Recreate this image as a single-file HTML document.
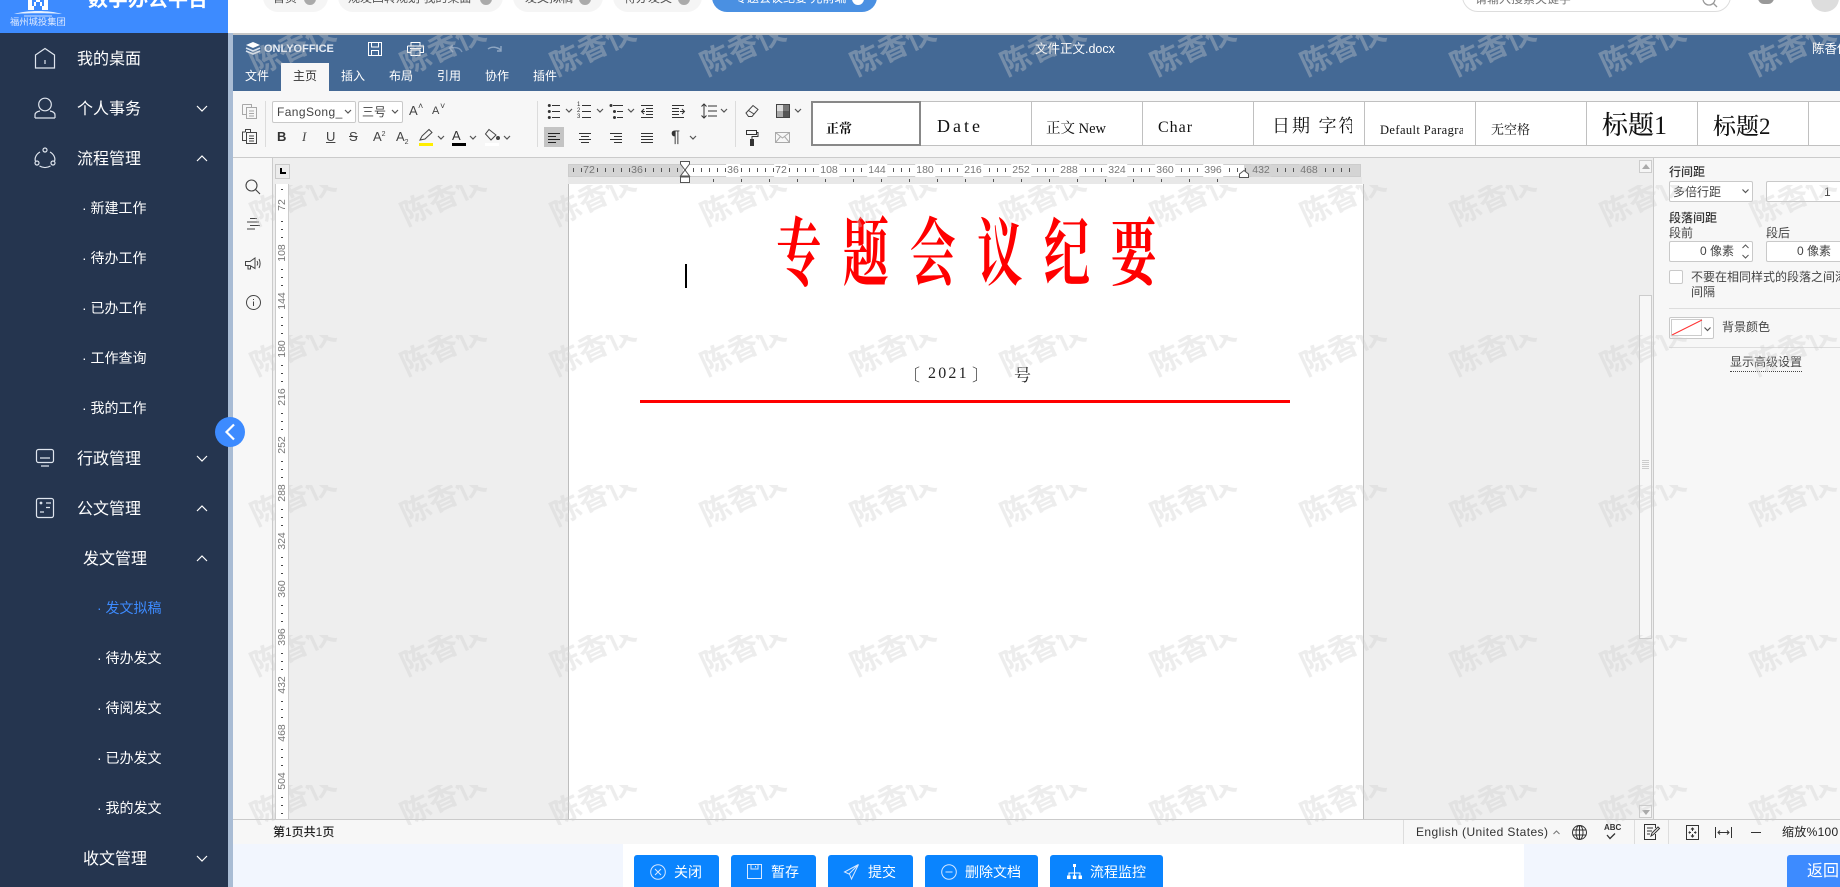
<!DOCTYPE html>
<html lang="zh"><head><meta charset="utf-8"><title>数字办公平台</title>
<style>
html,body{margin:0;padding:0;width:1840px;height:887px;overflow:hidden;background:#fff}
body{position:relative;font-family:"Liberation Sans","Noto Sans CJK SC",sans-serif;color:#333}
.a,.t,.s,svg.i{position:absolute}
.t{white-space:nowrap;height:20px;line-height:20px;font-size:12px}
.w{color:#fff}
.m{font-size:16px;color:#fff}
.u{font-size:14px;color:#fff}
.sb{position:absolute;left:0;top:0;width:228px;height:887px;background:#25354f}
.pill{position:absolute;top:-18px;height:30px;background:#f5f5f5;border-radius:15px}
.pc{position:absolute;top:-7px;width:12px;height:12px;border-radius:50%;background:#aaa}
.st{position:absolute;top:101px;height:45px;width:110px;background:#fff;border:1px solid #c0c0c0;border-left:0;overflow:hidden;color:#111;font-family:"Liberation Serif","Noto Serif CJK SC",serif}
.st span{position:absolute;white-space:nowrap;line-height:24px;height:24px}
.rn{position:absolute;top:0;height:13px;line-height:13px;font-size:10.5px;color:#777;padding:0 1px;transform:translateX(-50%)}
.vn{position:absolute;left:-8px;width:28px;height:12px;line-height:12px;text-align:center;font-size:10.5px;color:#777;background:#fff;transform:rotate(-90deg)}
.btn{position:absolute;top:855px;height:40px;background:#0a84fe;border-radius:3px}
.box{position:absolute;background:#fff;border:1px solid #c9c9c9;border-radius:2px;box-sizing:border-box}
svg{overflow:visible}
</style></head><body>

<!-- top header -->
<div class="pill" style="left:263px;width:65px"></div>
<div class="t" style="left:273px;top:-12px;font-size:12px;color:#555">首页</div><div class="pc" style="left:304px"></div>
<div class="pill" style="left:338px;width:165px"></div>
<div class="t" style="left:348px;top:-12px;color:#555">规发四转规划 我的桌面</div><div class="pc" style="left:480px"></div>
<div class="pill" style="left:513px;width:90px"></div>
<div class="t" style="left:525px;top:-12px;color:#555">发文拟稿</div><div class="pc" style="left:579px"></div>
<div class="pill" style="left:613px;width:89px"></div>
<div class="t" style="left:624px;top:-12px;color:#555">待办发文</div><div class="pc" style="left:678px"></div>
<div class="pill" style="left:712px;width:165px;background:#4a90e2"></div>
<div class="t w" style="left:735px;top:-12px">专题会议纪要 光前端</div><div class="pc" style="left:852px;background:#fff"></div>
<div class="a" style="left:1462px;top:-20px;width:269px;height:32px;border:1px solid #ddd;border-radius:16px;box-sizing:border-box;background:#fff"></div>
<div class="t" style="left:1475px;top:-11px;color:#777">请输入搜索关键字</div>
<svg class="i" style="left:1702px;top:-6px" width="20" height="20" viewBox="0 0 20 20" fill="none" stroke="#999" stroke-width="1.3"><circle cx="7" cy="5" r="6"/><path d="M11.5 9.5 L15 13"/></svg>
<div class="a" style="left:1758px;top:-8px;width:16px;height:12px;background:#999;border-radius:0 0 6px 6px"></div>
<div class="a" style="left:1811px;top:-16px;width:28px;height:28px;border-radius:50%;background:#ddd"></div>
<div class="a" style="left:233px;top:33px;width:1607px;height:2px;background:#c6c6c6"></div>

<!-- editor header -->
<div class="a" style="left:233px;top:35px;width:1607px;height:56px;background:#446995"></div>
<svg class="i" style="left:245px;top:42px" width="16" height="14" viewBox="0 0 16 14"><path d="M8 0 L15 3 L8 6 L1 3Z" fill="#fff"/><path d="M1 6 L8 9 L15 6 M1 9 L8 12 L15 9" fill="none" stroke="#d8e2ee" stroke-width="1.6"/></svg>
<div class="t w" style="left:264px;top:39px;font-weight:bold;font-size:11px;color:#e8eef6">ONLYOFFICE</div>
<svg class="i" style="left:368px;top:42px" width="14" height="14" viewBox="0 0 14 14" fill="none" stroke="#fff"><path d="M.5.5H13.5V13.5H.5ZM3.5.5V5H10.5V.5M3.5 13.5V8.5H10.5V13.5"/></svg>
<svg class="i" style="left:407px;top:42px" width="17" height="14" viewBox="0 0 17 14" fill="none" stroke="#fff"><path d="M4 4V.5H13V4M.5 4H16.5V10.5H13M4 10.5H.5V4M4 8H13V13.5H4ZM3 6.5H14"/></svg>
<svg class="i" style="left:448px;top:44px" width="14" height="10" viewBox="0 0 14 10" fill="none" stroke="#7e98b8" stroke-width="1.4"><path d="M14 8C12 3 7 3 2 4M5 1 L1.5 4.2 L5 8"/></svg>
<svg class="i" style="left:488px;top:45px" width="15" height="10" viewBox="0 0 15 10" fill="none" stroke="#8ea6c2" stroke-width="1.4"><path d="M0 4C4 1 9 2 13 5M13 1V6H9"/></svg>
<div class="t w" style="left:1035px;top:39px;font-size:12.5px">文件正文.docx</div>
<div class="t w" style="left:1812px;top:39px;width:28px;overflow:hidden;font-size:12.5px">陈香仪</div>
<div class="a" style="left:281px;top:63px;width:48px;height:28px;background:#f7f7f7"></div>
<div class="t w" style="left:245px;top:66px">文件</div>
<div class="t" style="left:293px;top:66px;color:#333">主页</div>
<div class="t w" style="left:341px;top:66px">插入</div>
<div class="t w" style="left:389px;top:66px">布局</div>
<div class="t w" style="left:437px;top:66px">引用</div>
<div class="t w" style="left:485px;top:66px">协作</div>
<div class="t w" style="left:533px;top:66px">插件</div>

<!-- toolbar -->
<div class="a" style="left:233px;top:91px;width:1607px;height:66px;background:#f7f7f7"></div>
<div class="a" style="left:233px;top:157px;width:1607px;height:1px;background:#cbcbcb"></div>
<div class="a" style="left:265px;top:101px;width:1px;height:46px;background:#dcdcdc"></div>
<div class="a" style="left:537px;top:101px;width:1px;height:46px;background:#dcdcdc"></div>
<div class="a" style="left:735px;top:101px;width:1px;height:46px;background:#dcdcdc"></div>
<svg class="i" style="left:242px;top:104px" width="15" height="15" viewBox="0 0 15 15" fill="none" stroke="#a8a8a8"><path d="M.5.5H9.5V3M4.5 3.5H14.5V14.5H4.5ZM.5.5V10.5H4M7 7H12M7 9.5H12M7 12H12"/></svg>
<svg class="i" style="left:242px;top:129px" width="15" height="15" viewBox="0 0 15 15" fill="none" stroke="#444"><path d="M3.5 3V.5H8.5V3M4.5 3.5H14.5V14.5H4.5ZM4.5 11.5H.5V3H3.5M7 7H12M7 9.5H12M7 12H12"/></svg>
<div class="box" style="left:272px;top:101px;width:84px;height:22px;overflow:hidden"><span class="t" style="left:4px;top:0;font-size:12px;letter-spacing:.4px;color:#444">FangSong_(</span><span class="a" style="right:0;top:0;width:12px;height:20px;background:#fff"></span></div>
<div class="box" style="left:358px;top:101px;width:45px;height:22px"><span class="t" style="left:3px;top:0;color:#444">三号</span></div>
<div class="t" style="left:409px;top:101px;font-size:13px;color:#444">A</div><div class="t" style="left:418px;top:96px;font-size:9px;color:#444">˄</div>
<div class="t" style="left:432px;top:101px;font-size:11px;color:#444">A</div><div class="t" style="left:440px;top:96px;font-size:9px;color:#444">˅</div>
<div class="t" style="left:277px;top:127px;font-weight:bold;font-size:13px;color:#333">B</div>
<div class="t" style="left:302px;top:127px;font-style:italic;font-size:13px;font-family:'Liberation Serif',serif;color:#444">I</div>
<div class="t" style="left:326px;top:127px;font-size:13px;color:#444;text-decoration:underline">U</div>
<div class="t" style="left:349px;top:127px;font-size:13px;color:#444;text-decoration:line-through">S</div>
<div class="t" style="left:373px;top:127px;font-size:13px;color:#444">A<sup style="font-size:7px;vertical-align:5px;line-height:0">2</sup></div>
<div class="t" style="left:396px;top:127px;font-size:13px;color:#444">A<sub style="font-size:7px;vertical-align:-3px;line-height:0">2</sub></div>
<svg class="i" style="left:419px;top:129px" width="15" height="12" viewBox="0 0 15 12" fill="none" stroke="#444"><path d="M1 11L3 7L10 0.500L13 3.500L6 10Z"/></svg>
<div class="a" style="left:419px;top:143px;width:14px;height:3px;background:#ffee00"></div>
<div class="t" style="left:452px;top:126px;font-size:13px;color:#333">A</div>
<div class="a" style="left:452px;top:143px;width:14px;height:3px;background:#000"></div>
<svg class="i" style="left:485px;top:129px" width="15" height="12" viewBox="0 0 15 12" fill="none" stroke="#444"><path d="M4 0.500L11 6L6 11L0.500 5Z"/><circle cx="13" cy="9" r="1.500" fill="#444"/></svg>
<div class="a" style="left:485px;top:143px;width:14px;height:3px;background:#fff"></div>
<div class="a" style="left:544px;top:127px;width:20px;height:20px;background:#c4c4c4"></div>
<svg class="i" style="left:0;top:0" width="1" height="1" fill="none" stroke="#555" stroke-width="1.200">
<path d="M345 110l3 3 3-3M392 110l3 3 3-3M438 136l3 3 3-3M470 136l3 3 3-3M504 136l3 3 3-3M566 109l3 3 3-3M597 109l3 3 3-3M628 109l3 3 3-3M721 109l3 3 3-3M690 136l3 3 3-3M795 109l3 3 3-3"/>
<g stroke="#333" stroke-width="1">
<path d="M552 105.500H560M552 111.500H560M552 117.500H560"/>
<path d="M582 105.500H591M582 111.500H591M582 117.500H591"/>
<path d="M613 105.500H623M617 111.500H623M617 117.500H623"/>
<path d="M641 105.500H653M646 108.500H653M646 111.500H653M646 114.500H653M641 117.500H653M642 111.500H645M644 109L641.500 111.500L644 114"/>
<path d="M672 105.500H684M672 108.500H679M672 111.500H679M672 114.500H679M672 117.500H684M680 111.500H684M682 109L684.500 111.500L682 114"/>
<path d="M704 104V118M701.500 106.500L704 104L706.500 106.500M701.500 115.500L704 118L706.500 115.500M708 106H717M708 111H717M708 116H717"/>
<path d="M548 133.500H560M548 136.500H556M548 139.500H560M548 142.500H556" stroke="#222"/>
<path d="M579 133.500H591M581 136.500H589M579 139.500H591M581 142.500H589M610 133.500H622M614 136.500H622M610 139.500H622M614 142.500H622M641 133.500H653M641 136.500H653M641 139.500H653M641 142.500H653"/>
</g>
<g fill="#333" stroke="none"><circle cx="549.300" cy="105.500" r="1.500"/><circle cx="549.300" cy="111.500" r="1.500"/><circle cx="549.300" cy="117.500" r="1.500"/><circle cx="611" cy="105.500" r="1.500"/><circle cx="614.500" cy="111.500" r="1.500"/><circle cx="614.500" cy="117.500" r="1.500"/></g>
</svg>
<div class="a" style="left:577px;top:102px;font-size:6px;line-height:6px;color:#333">1<br>2<br>3</div>
<div class="a" style="left:671px;top:127px;font-size:17px;line-height:20px;color:#333;font-family:'Liberation Sans',sans-serif">¶</div>
<svg class="i" style="left:745px;top:104px" width="14" height="14" viewBox="0 0 14 14" fill="none" stroke="#444"><path d="M1 9L8 1.500L13 5.500L7 12.500H3.500ZM3.500 6.500L9 10"/></svg>
<svg class="i" style="left:776px;top:104px" width="14" height="14" viewBox="0 0 14 14"><rect x=".5" y=".5" width="13" height="13" fill="#fff" stroke="#444"/><rect x="7" y="1" width="6" height="6" fill="#777"/><rect x="1" y="7" width="6" height="6" fill="#aaa"/><rect x="1" y="1" width="6" height="6" fill="#ddd"/><rect x="7" y="7" width="6" height="6" fill="#555"/></svg>
<svg class="i" style="left:745px;top:130px" width="14" height="16" viewBox="0 0 14 16"><path d="M1.500 .5H11.500V4.500H1.500Z" fill="none" stroke="#333"/><path d="M11.500 2.500H13V6.500H7V9" fill="none" stroke="#333"/><rect x="5" y="9" width="4" height="7" fill="#333"/></svg>
<svg class="i" style="left:775px;top:132px" width="15" height="11" viewBox="0 0 15 11" fill="none" stroke="#aaa"><path d="M.5.5H14.500V10.500H.5ZM.5.5L7.500 6L14.500.5M.5 10.500L5.500 4.500M14.500 10.500L9.500 4.500"/></svg>

<!-- style gallery -->
<div class="st" style="left:921px;width:111px;box-sizing:border-box"><span style="left:16px;top:12px;font-size:18px;letter-spacing:3px">Date</span></div>
<div class="st" style="left:1032px;width:111px;box-sizing:border-box"><span style="left:14px;top:15px;font-size:14.500px">正文 New</span></div>
<div class="st" style="left:1143px;width:111px;box-sizing:border-box"><span style="left:15px;top:14px;font-size:16px;letter-spacing:1px">Char</span></div>
<div class="st" style="left:1254px;width:111px;box-sizing:border-box"><span style="left:18px;top:12px;font-size:18px;letter-spacing:2px;width:80px;overflow:hidden">日期 字符</span></div>
<div class="st" style="left:1365px;width:111px;box-sizing:border-box"><span style="left:15px;top:16px;font-size:12.5px;width:83px;overflow:hidden;letter-spacing:.4px">Default Paragraph</span></div>
<div class="st" style="left:1476px;width:111px;box-sizing:border-box"><span style="left:15px;top:16px;font-size:13px">无空格</span></div>
<div class="st" style="left:1587px;width:111px;box-sizing:border-box"><span style="left:15px;top:12px;font-size:26px;line-height:24px;font-weight:500">标题1</span></div>
<div class="st" style="left:1698px;width:111px;box-sizing:border-box"><span style="left:15px;top:13px;font-size:23px;line-height:24px;font-weight:500">标题2</span></div>
<div class="st" style="left:1809px;width:40px;box-sizing:border-box"></div>
<div class="st" style="left:811px;width:110px;box-sizing:border-box;border:2.500px solid #888"><span style="left:13px;top:14px;font-size:13px;font-weight:bold">正常</span></div>

<!-- workspace -->
<div class="a" style="left:233px;top:158px;width:39px;height:661px;background:#f7f7f7"></div>
<div class="a" style="left:272px;top:158px;width:1px;height:661px;background:#cbcbcb"></div>
<div class="a" style="left:273px;top:158px;width:1380px;height:661px;background:#eee"></div>
<div class="a" style="left:1653px;top:158px;width:1px;height:661px;background:#cbcbcb"></div>
<div class="a" style="left:1654px;top:158px;width:186px;height:661px;background:#f7f7f7"></div>
<!-- page -->
<div class="a" style="left:568px;top:184px;width:794px;height:635px;background:#fff;border-left:1px solid #bdbdbd;border-right:1px solid #bdbdbd"></div>

<!-- left panel icons -->
<svg class="i" style="left:245px;top:179px" width="16" height="16" viewBox="0 0 16 16" fill="none" stroke="#444" stroke-width="1.100"><circle cx="6.500" cy="6.500" r="5.500"/><path d="M10.500 10.500L15 15"/></svg>
<svg class="i" style="left:246px;top:218px" width="14" height="13" viewBox="0 0 14 13" fill="none" stroke="#444"><path d="M4 .5H11M1 4H13M4 7.500H14M1 11H9"/></svg>
<svg class="i" style="left:245px;top:257px" width="16" height="13" viewBox="0 0 16 13" fill="none" stroke="#444"><path d="M.5 4.500H5L10 1V11.500L5 8.500H.5ZM3 8.500V12H5.500V9M12 4C13 5.500 13 7 12 8.500M14 2C15.500 5 15.500 8 14 11"/></svg>
<svg class="i" style="left:246px;top:295px" width="15" height="15" viewBox="0 0 15 15" fill="none" stroke="#444"><circle cx="7.500" cy="7.500" r="7"/><path d="M7.500 6.500V11M7.500 4V5"/></svg>

<!-- horizontal ruler -->
<div class="a" style="left:568px;top:177px;width:794px;height:7px;background:#e8e8e8"></div>
<div class="a" style="left:713px;top:179px;width:505px;height:3px;background:repeating-linear-gradient(90deg,#555 0,#555 1px,transparent 1px,transparent 28px)"></div>
<div class="a" style="left:568px;top:164px;width:793px;height:13px;background:#fff;box-sizing:border-box;border:1px solid #ccc"></div>
<div class="a" style="left:569px;top:165px;width:114px;height:11px;background:#d4d4d4"></div>
<div class="a" style="left:1244px;top:165px;width:116px;height:11px;background:#d4d4d4"></div>
<div class="a" style="left:573px;top:168px;width:784px;height:4px;background:repeating-linear-gradient(90deg,#555 0,#555 1px,transparent 1px,transparent 8px)"></div>
<div class="a" style="left:568px;top:164px;width:793px;height:13px">
<span class="rn" style="left:21px;background:#d4d4d4">72</span><span class="rn" style="left:69px;background:#d4d4d4">36</span><span class="rn" style="left:165px;background:#fff">36</span><span class="rn" style="left:213px;background:#fff">72</span><span class="rn" style="left:261px;background:#fff">108</span><span class="rn" style="left:309px;background:#fff">144</span><span class="rn" style="left:357px;background:#fff">180</span><span class="rn" style="left:405px;background:#fff">216</span><span class="rn" style="left:453px;background:#fff">252</span><span class="rn" style="left:501px;background:#fff">288</span><span class="rn" style="left:549px;background:#fff">324</span><span class="rn" style="left:597px;background:#fff">360</span><span class="rn" style="left:645px;background:#fff">396</span><span class="rn" style="left:693px;background:#d4d4d4">432</span><span class="rn" style="left:741px;background:#d4d4d4">468</span></div>
<svg class="i" style="left:680px;top:161px" width="10" height="22" viewBox="0 0 10 22"><path d="M.5.5H9.500V3L5 9L.5 3ZM5 9L9.500 15H.5Z" fill="#fff" stroke="#555"/><path d="M.5 15.500H9.500V21.500H.5Z" fill="#fff" stroke="#555"/><path d="M.5 16H9.500" stroke="#555"/></svg>
<svg class="i" style="left:1239px;top:170px" width="10" height="8" viewBox="0 0 10 8"><path d="M.5 7.500V4L5 .5L9.500 4V7.500Z" fill="#fff" stroke="#555"/></svg>
<div class="a" style="left:275px;top:164px;width:15px;height:15px;box-sizing:border-box;background:#ececec;border:1px solid #c9c9c9"></div>
<div class="a" style="left:280px;top:168px;width:2px;height:6px;background:#000"></div><div class="a" style="left:280px;top:172px;width:6px;height:2px;background:#000"></div>

<!-- doc content -->
<div class="a" style="left:685px;top:264px;width:2px;height:24px;background:#000"></div>
<div class="a" id="title" style="left:776px;top:204px;width:640px;height:88px;line-height:88px;white-space:nowrap;font-family:'Noto Serif CJK SC','Noto Sans CJK SC',serif;font-weight:700;font-size:74px;letter-spacing:34px;color:#f00;transform:scaleX(.62);transform-origin:0 0">专题会议纪要</div>
<div class="a" style="left:903px;top:362px;height:24px;line-height:24px;font-family:'Noto Serif CJK SC',serif;font-size:17px;color:#222;white-space:nowrap">〔</div>
<div class="a" style="left:928px;top:362px;height:24px;line-height:24px;font-family:'Liberation Serif',serif;font-size:16px;color:#222;letter-spacing:2.200px;white-space:nowrap">2021</div>
<div class="a" style="left:972px;top:362px;height:24px;line-height:24px;font-family:'Noto Serif CJK SC',serif;font-size:17px;color:#222;white-space:nowrap">〕</div>
<div class="a" style="left:1014px;top:362px;height:24px;line-height:24px;font-family:'Noto Serif CJK SC',serif;font-size:17px;color:#222;white-space:nowrap">号</div>
<div class="a" style="left:640px;top:399.500px;width:650px;height:3px;background:#f00"></div>

<!-- scrollbar -->
<div class="a" style="left:1639px;top:160px;width:13px;height:13px;box-sizing:border-box;border:1px solid #ccc;background:#f5f5f5"></div>
<svg class="i" style="left:1642px;top:164px" width="8" height="5"><path d="M0 5L4 0L8 5Z" fill="#aaa"/></svg>
<div class="a" style="left:1639px;top:295px;width:13px;height:344px;box-sizing:border-box;border:1px solid #ccc;background:#f7f7f7"></div>
<div class="a" style="left:1642px;top:460px;width:7px;height:10px;background:repeating-linear-gradient(180deg,#ccc 0,#ccc 1px,transparent 1px,transparent 2px)"></div>
<div class="a" style="left:1639px;top:805px;width:13px;height:13px;box-sizing:border-box;border:1px solid #ccc;background:#f5f5f5"></div>
<svg class="i" style="left:1642px;top:810px" width="8" height="5"><path d="M0 0L4 5L8 0Z" fill="#aaa"/></svg>

<!-- right panel -->
<div class="t" style="left:1669px;top:162px;font-weight:500">行间距</div>
<div class="box" style="left:1669px;top:181px;width:84px;height:21px"></div>
<div class="t" style="left:1673px;top:182px;color:#444">多倍行距</div>
<svg class="i" style="left:1742px;top:189px" width="7" height="5" fill="none" stroke="#555" stroke-width="1.200"><path d="M.5.5L3.500 3.500L6.500.5"/></svg>
<div class="box" style="left:1766px;top:181px;width:90px;height:21px"></div>
<div class="t" style="left:1824px;top:182px;color:#444">1</div>
<div class="t" style="left:1669px;top:208px;font-weight:500">段落间距</div>
<div class="t" style="left:1669px;top:223px;color:#444">段前</div>
<div class="t" style="left:1766px;top:223px;color:#444">段后</div>
<div class="box" style="left:1669px;top:241px;width:84px;height:21px"></div>
<div class="t" style="left:1700px;top:241px;color:#444">0 像素</div>
<svg class="i" style="left:1742px;top:244px" width="7" height="15" fill="none" stroke="#555"><path d="M.5 4L3.500 1L6.500 4M.5 11L3.500 14L6.500 11"/></svg>
<div class="box" style="left:1766px;top:241px;width:90px;height:21px"></div>
<div class="t" style="left:1797px;top:241px;color:#444">0 像素</div>
<div class="box" style="left:1669px;top:270px;width:14px;height:14px"></div>
<div class="t" style="left:1691px;top:267px;color:#444;width:149px;overflow:hidden">不要在相同样式的段落之间添加</div>
<div class="t" style="left:1691px;top:282px;color:#444">间隔</div>
<div class="a" style="left:1669px;top:308px;width:171px;height:1px;background:#ddd"></div>
<div class="box" style="left:1669px;top:317px;width:45px;height:22px"></div>
<svg class="i" style="left:1671px;top:319px" width="32" height="17"><rect x=".5" y=".5" width="30" height="16" fill="#fff" stroke="#ccc"/><path d="M1 16L31 1" stroke="#f33" stroke-width="1"/></svg>
<svg class="i" style="left:1704px;top:327px" width="7" height="5" fill="none" stroke="#555" stroke-width="1.200"><path d="M.5.5L3.500 3.500L6.500.5"/></svg>
<div class="t" style="left:1722px;top:317px;color:#444">背景颜色</div>
<div class="a" style="left:1669px;top:347px;width:171px;height:1px;background:#ddd"></div>
<div class="t" style="left:1730px;top:352px;color:#444">显示高级设置</div>
<div class="a" style="left:1730px;top:371px;width:72px;border-top:1px dotted #444"></div>

<!-- status bar -->
<div class="a" style="left:233px;top:819px;width:1607px;height:1px;background:#cbcbcb"></div>
<div class="a" style="left:233px;top:820px;width:1607px;height:24px;background:#f7f7f7"></div>

<!-- watermark -->
<svg class="a" style="left:0;top:0;pointer-events:none" width="1840" height="887">
<defs><pattern id="wm" patternUnits="userSpaceOnUse" x="233" y="35" width="150" height="150">
<text x="23.500" y="41" transform="rotate(-25 23.500 41)" font-family="Liberation Sans,Noto Sans CJK SC,sans-serif" font-size="30" fill="#cdcdcd" fill-opacity=".36" font-weight="700">陈香仪</text></pattern></defs>
<rect x="233" y="35" width="1607" height="790" fill="url(#wm)"/>
</svg>

<!-- vertical ruler (over watermark) -->
<div class="a" style="left:275px;top:184px;width:14px;height:635px;box-sizing:border-box;background:#fff;border-left:1px solid #ccc;border-right:1px solid #ccc"></div>
<div class="a" style="left:281px;top:189px;width:2px;height:625px;background:repeating-linear-gradient(180deg,#444 0,#444 1px,transparent 1px,transparent 8px)"></div>
<div class="a" style="left:276px;top:0;width:12px;height:0">
<span class="vn" style="top:199px">72</span><span class="vn" style="top:247px">108</span><span class="vn" style="top:295px">144</span><span class="vn" style="top:343px">180</span><span class="vn" style="top:391px">216</span><span class="vn" style="top:439px">252</span><span class="vn" style="top:487px">288</span><span class="vn" style="top:535px">324</span><span class="vn" style="top:583px">360</span><span class="vn" style="top:631px">396</span><span class="vn" style="top:679px">432</span><span class="vn" style="top:727px">468</span><span class="vn" style="top:775px">504</span></div>

<!-- status content -->
<div class="t" style="left:273px;top:822px;color:#222;font-weight:500">第1页共1页</div>
<div class="a" style="left:1403px;top:820px;width:1px;height:24px;background:#ddd"></div>
<div class="a" style="left:1634px;top:820px;width:1px;height:24px;background:#ddd"></div>
<div class="a" style="left:1668px;top:820px;width:1px;height:24px;background:#ddd"></div>
<div class="t" style="left:1416px;top:822px;color:#333;letter-spacing:.42px">English (United States)</div>
<svg class="i" style="left:1553px;top:830px" width="7" height="5" fill="none" stroke="#777"><path d="M.5 4L3.500 1L6.500 4"/></svg>
<svg class="i" style="left:1572px;top:825px" width="15" height="15" viewBox="0 0 15 15" fill="none" stroke="#333"><circle cx="7.500" cy="7.500" r="7"/><ellipse cx="7.500" cy="7.500" rx="3.500" ry="7"/><path d="M.5 5H14.500M.5 10H14.500M7.500 .5V14.500"/></svg>
<div class="t" style="left:1604px;top:818px;font-size:8px;font-weight:bold;color:#333">ABC</div>
<svg class="i" style="left:1606px;top:833px" width="10" height="7" fill="none" stroke="#333" stroke-width="1.300"><path d="M1 2L4 5.500L9 .5"/></svg>
<svg class="i" style="left:1644px;top:824px" width="16" height="16" viewBox="0 0 16 16" fill="none" stroke="#333"><path d="M11.500 4V.5H.5V15.500H11.500V10M3 4H9M3 7H8M3 10H6M7 12L8 9L14 3L15.500 4.500L9.500 10.500Z"/></svg>
<svg class="i" style="left:1686px;top:825px" width="13" height="15" viewBox="0 0 13 15" fill="none" stroke="#333"><path d="M.5.5H12.500V14.500H.5ZM6.500 3V6M5 4.500L6.500 3L8 4.500M6.500 12V9M5 10.500L6.500 12L8 10.500M3 7.500H5M4 6.500L3 7.500L4 8.500M10 7.500H8M9 6.500L10 7.500L9 8.500"/></svg>
<svg class="i" style="left:1715px;top:827px" width="17" height="11" viewBox="0 0 17 11" fill="none" stroke="#333"><path d="M.5 0V11M16.500 0V11M3 5.500H14M5 3.500L3 5.500L5 7.500M12 3.500L14 5.500L12 7.500"/></svg>
<div class="a" style="left:1751px;top:832px;width:10px;height:1px;background:#333"></div>
<div class="t" style="left:1782px;top:822px;color:#222;letter-spacing:.3px">缩放%100</div>

<!-- footer -->
<div class="a" style="left:233px;top:844px;width:390px;height:43px;background:#f2f6fe"></div>
<div class="a" style="left:1524px;top:844px;width:316px;height:43px;background:#f2f6fe"></div>
<div class="btn" style="left:634px;width:85px"></div>
<div class="btn" style="left:731px;width:85px"></div>
<div class="btn" style="left:828px;width:85px"></div>
<div class="btn" style="left:925px;width:113px"></div>
<div class="btn" style="left:1050px;width:113px"></div>
<div class="btn" style="left:1787px;width:60px;background:#3d8bff"></div>
<svg class="i" style="left:650px;top:864px" width="16" height="16" viewBox="0 0 16 16" fill="none" stroke="#d8e8ff"><circle cx="8" cy="8" r="7.300"/><path d="M5 5L11 11M11 5L5 11"/></svg>
<div class="t w" style="left:674px;top:862px;font-size:14px">关闭</div>
<svg class="i" style="left:747px;top:864px" width="15" height="15" viewBox="0 0 15 15" fill="none" stroke="#d8e8ff"><path d="M.5.5H14.500V14.500H.5ZM4 .5V5H11V.5M8.500 2V3.500"/></svg>
<div class="t w" style="left:771px;top:862px;font-size:14px">暂存</div>
<svg class="i" style="left:844px;top:864px" width="15" height="16" viewBox="0 0 15 16" fill="none" stroke="#d8e8ff"><path d="M14.500 .5L.5 8L5 10L14.500 .5L7.500 15L5.500 10"/></svg>
<div class="t w" style="left:868px;top:862px;font-size:14px">提交</div>
<svg class="i" style="left:941px;top:864px" width="16" height="16" viewBox="0 0 16 16" fill="none" stroke="#d8e8ff"><circle cx="8" cy="8" r="7.300"/><path d="M4.500 8H11.500"/></svg>
<div class="t w" style="left:965px;top:862px;font-size:14px">删除文档</div>
<svg class="i" style="left:1067px;top:864px" width="15" height="15" viewBox="0 0 15 15"><path d="M7.500 2V9M2 13V9H13V13M7.500 9V13" fill="none" stroke="#fff"/><rect x="6" y="0" width="3" height="3" fill="#fff"/><rect x="0" y="11.500" width="3.500" height="3.500" fill="#fff"/><rect x="5.800" y="11.500" width="3.500" height="3.500" fill="#fff"/><rect x="11.500" y="11.500" width="3.500" height="3.500" fill="#fff"/></svg>
<div class="t w" style="left:1090px;top:862px;font-size:14px">流程监控</div>
<div class="t w" style="left:1807px;top:862px;font-size:16px;width:33px;overflow:hidden">返回</div>

<!-- sidebar -->
<div class="a" style="left:228px;top:0;width:5px;height:887px;background:#a9bcd4"></div>
<div class="a" style="left:228px;top:0;width:5px;height:33px;background:#fff"></div>
<div class="sb"></div>
<div class="a" style="left:0;top:0;width:228px;height:33px;background:#3d8bff"></div>
<svg class="i" style="left:12px;top:0" width="52" height="17" viewBox="0 0 52 17"><path d="M16 0V10H22V2H30V10H36V0H32V6H28V0H24V6H20V0Z" fill="#fff"/><path d="M2 14C15 10 37 10 50 14C37 13 15 13 2 14Z" fill="#e6f0ff"/><path d="M12 16H40" stroke="#cfe2ff"/></svg>
<div class="t w" style="left:10px;top:12px;font-size:9.300px;color:#dfeaff">福州城投集团</div>
<div class="t w" style="left:88px;top:-12px;font-size:20px;font-weight:bold;height:24px;line-height:24px">数字办公平台</div>

<svg class="i" style="left:0;top:0" width="1" height="1" fill="none" stroke="#dfe5ee" stroke-width="1.200">
<path d="M35.500 55L45 48.500L54.500 55V68H35.500ZM45 60V64"/>
<circle cx="45" cy="104.500" r="6.300"/><path d="M35 118V115C35 112.500 37 111.500 40 111M55 118V115C55 112.500 53 111.500 50 111M35 118H55"/>
<path d="M40 152C35.500 154.500 34.500 159 35.500 161M50 152C54.500 154.500 55.500 159 54.500 161M39.500 166C43 168 47 168 50.500 166"/><circle cx="45" cy="150" r="2"/><circle cx="37" cy="163" r="2"/><circle cx="53" cy="163" r="2"/>
<rect x="36.500" y="449.500" width="17" height="13" rx="2"/><path d="M40 458H50M41 466H49"/>
<rect x="36.500" y="498.500" width="17" height="19" rx="2"/><path d="M46 503H51M46 507.500H50M40 512H44"/><circle cx="41" cy="503" r=".8"/>
<path d="M197 106L202 111L207 106M197 161L202 156L207 161M197 456L202 461L207 456M197 511L202 506L207 511M197 561L202 556L207 561M197 856L202 861L207 856" stroke="#fff"/>
</svg>
<div class="t m" style="left:77px;top:49.500px">我的桌面</div>
<div class="t m" style="left:77px;top:99.500px">个人事务</div>
<div class="t m" style="left:77px;top:149.500px">流程管理</div>
<div class="t u" style="left:82px;top:198px">· 新建工作</div>
<div class="t u" style="left:82px;top:248px">· 待办工作</div>
<div class="t u" style="left:82px;top:298px">· 已办工作</div>
<div class="t u" style="left:82px;top:348px">· 工作查询</div>
<div class="t u" style="left:82px;top:398px">· 我的工作</div>
<div class="t m" style="left:77px;top:449.500px">行政管理</div>
<div class="t m" style="left:77px;top:499.500px">公文管理</div>
<div class="t m" style="left:83px;top:549.500px">发文管理</div>
<div class="t u" style="left:97px;top:598px;color:#3d8bff">· 发文拟稿</div>
<div class="t u" style="left:97px;top:648px">· 待办发文</div>
<div class="t u" style="left:97px;top:698px">· 待阅发文</div>
<div class="t u" style="left:97px;top:748px">· 已办发文</div>
<div class="t u" style="left:97px;top:798px">· 我的发文</div>
<div class="t m" style="left:83px;top:849.500px">收文管理</div>
<div class="a" style="left:215px;top:417px;width:30px;height:30px;border-radius:50%;background:#3d8bff"></div>
<svg class="i" style="left:224px;top:423px" width="12" height="18" fill="none" stroke="#fff" stroke-width="2.200"><path d="M10 1.500L2.500 9L10 16.500"/></svg>
</body></html>
